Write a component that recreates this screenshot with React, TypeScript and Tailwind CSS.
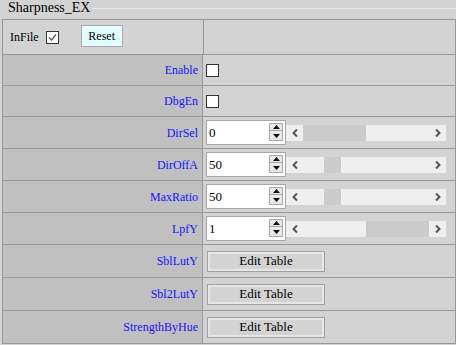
import React from "react";

const serif = { fontFamily: '"Liberation Serif", "Times New Roman", serif' };

function Check({ checked }: { checked?: boolean }) {
  return (
    <span className="inline-flex h-[13px] w-[13px] items-center justify-center border border-[#333] bg-white">
      {checked && (
        <svg width="11" height="11" viewBox="0 0 11 11">
          <path d="M2 5.5 L4.5 8 L9 2.5" fill="none" stroke="#555" strokeWidth="1.3" />
        </svg>
      )}
    </span>
  );
}

function Label({ text }: { text: string }) {
  return (
    <div className="flex w-[200px] items-center justify-end border-r border-[#999] bg-[#c0c0c0] pr-[4px] text-[12px] text-[#1515ff]">
      {text}
    </div>
  );
}

function Spinner({ value, thumbLeft, thumbWidth }: { value: string; thumbLeft: number; thumbWidth: number }) {
  return (
    <div className="flex items-center pl-[3px]">
      <div className="relative flex h-[25px] w-[80px] items-center border border-[#a8a8a8] bg-white pl-[2px] text-[13px] text-black">
        {value}
        <div className="absolute right-[2px] top-[2px] flex flex-col">
          <div className="flex h-[8px] w-[14px] items-center justify-center border border-[#aaa] bg-[#e8e8e8]">
            <svg width="7" height="4" viewBox="0 0 7 4"><path d="M0 4 L3.5 0 L7 4Z" fill="#111" /></svg>
          </div>
          <div className="flex h-[10px] w-[14px] items-center justify-center border border-t-0 border-[#aaa] bg-[#e8e8e8]">
            <svg width="7" height="4" viewBox="0 0 7 4"><path d="M0 0 L3.5 4 L7 0Z" fill="#111" /></svg>
          </div>
        </div>
      </div>
      <div className="relative flex h-[16px] w-[160px] items-center bg-[#efefef]">
        <div className="flex h-[16px] w-[17px] items-center justify-center">
          <svg width="6" height="8" viewBox="0 0 6 8"><path d="M5 0.5 L1.5 4 L5 7.5" fill="none" stroke="#555" strokeWidth="2" /></svg>
        </div>
        <div className="relative h-[16px] flex-1">
          <div className="absolute top-0 h-[16px] bg-[#cbcbcb]" style={{ left: thumbLeft, width: thumbWidth }} />
        </div>
        <div className="flex h-[16px] w-[17px] items-center justify-center">
          <svg width="6" height="8" viewBox="0 0 6 8"><path d="M1 0.5 L4.5 4 L1 7.5" fill="none" stroke="#555" strokeWidth="2" /></svg>
        </div>
      </div>
    </div>
  );
}

function EditBtn() {
  return (
    <div className="flex items-center pl-[4px]">
      <div className="flex h-[21px] w-[118px] items-center justify-center border border-[#a0a0a0] bg-[#d3d3d3] text-[13px] text-black shadow-[inset_0_0_0_2px_#e6e6e6]">
        Edit Table
      </div>
    </div>
  );
}

export default function App() {
  return (
    <div className="h-[345px] w-[456px] overflow-hidden bg-[#d3d3d3]" style={serif}>
      <div className="flex h-[19px] items-start">
        <div className="pl-[8px] text-[14px] leading-[16px] text-black">Sharpness_EX</div>
        <div className="ml-[2px] mt-[8px] h-px flex-1 bg-[#e6e6e6]" />
      </div>
      <div className="ml-[2px] w-[454px] border border-[#999]">
        <div className="flex h-[35px] border-b border-[#999]">
          <div className="flex w-[201px] items-center border-r border-[#999] pl-[7px] text-[12px] text-black">
            <span>InFile</span>
            <span className="ml-[7px] flex"><Check checked /></span>
            <div className="ml-[22px] mb-[3px] flex h-[22px] w-[42px] items-center justify-center border border-[#aaa] bg-[#e0ffff] text-[12px] shadow-[inset_0_0_0_1px_#f4f4f4]">
              Reset
            </div>
          </div>
          <div className="flex-1" />
        </div>
        <div className="flex h-[31px] border-b border-[#999]">
          <Label text="Enable" />
          <div className="flex items-center pl-[3px]"><Check /></div>
        </div>
        <div className="flex h-[31px] border-b border-[#999]">
          <Label text="DbgEn" />
          <div className="flex items-center pl-[3px]"><Check /></div>
        </div>
        <div className="flex h-[32px] border-b border-[#999]">
          <Label text="DirSel" />
          <Spinner value="0" thumbLeft={0} thumbWidth={63} />
        </div>
        <div className="flex h-[32px] border-b border-[#999]">
          <Label text="DirOffA" />
          <Spinner value="50" thumbLeft={21} thumbWidth={17} />
        </div>
        <div className="flex h-[32px] border-b border-[#999]">
          <Label text="MaxRatio" />
          <Spinner value="50" thumbLeft={21} thumbWidth={17} />
        </div>
        <div className="flex h-[32px] border-b border-[#999]">
          <Label text="LpfY" />
          <Spinner value="1" thumbLeft={63} thumbWidth={63} />
        </div>
        <div className="flex h-[33px] border-b border-[#999]">
          <Label text="SblLutY" />
          <EditBtn />
        </div>
        <div className="flex h-[33px] border-b border-[#999]">
          <Label text="Sbl2LutY" />
          <EditBtn />
        </div>
        <div className="flex h-[32px]">
          <Label text="StrengthByHue" />
          <EditBtn />
        </div>
      </div>
    </div>
  );
}
